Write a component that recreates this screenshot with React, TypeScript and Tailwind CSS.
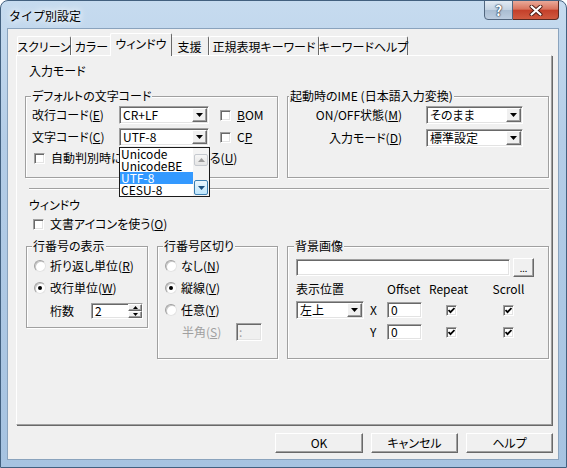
import type { ReactNode } from "react";

const sunken =
  "border border-t-[#a0a0a0] border-l-[#a0a0a0] border-b-white border-r-white shadow-[inset_1px_1px_0_#696969,inset_-1px_-1px_0_#e3e3e3]";
const raised =
  "border border-t-white border-l-white border-b-[#696969] border-r-[#696969] shadow-[inset_-1px_-1px_0_#a0a0a0]";
const tabBase =
  "flex items-center justify-center whitespace-nowrap rounded-t-[2px] border-t border-l border-r border-t-white border-l-white border-r-[#696969] leading-[12px]";

function Group({ title, titleLeft, className, children }: { title: string; titleLeft: string; className: string; children: ReactNode }) {
  return (
    <div className={`relative shrink-0 border border-[#a0a0a0] shadow-[inset_1px_1px_0_#fff,1px_1px_0_#fff] ${className}`}>
      <span className={`absolute top-[-7px] whitespace-nowrap bg-[#f0f0f0] px-[1px] leading-[12px] ${titleLeft}`}>{title}</span>
      {children}
    </div>
  );
}

function DropBtn() {
  return (
    <span className={`mr-[1px] flex h-[14px] w-[15px] shrink-0 items-center justify-center bg-[#f0f0f0] ${raised}`}>
      <svg width="7" height="4" viewBox="0 0 7 4">
        <path d="M0 0h7L3.5 4z" fill="#000" />
      </svg>
    </span>
  );
}

function Combo({ value, className }: { value: string; className: string }) {
  return (
    <div className={`flex shrink-0 items-center bg-white ${sunken} ${className}`}>
      <span className="min-w-0 flex-1 whitespace-nowrap pl-[3px] leading-[14px]">{value}</span>
      <DropBtn />
    </div>
  );
}

function Check({ on, className = "" }: { on?: boolean; className?: string }) {
  return (
    <span className={`flex h-[11px] w-[11px] shrink-0 items-center justify-center bg-white ${sunken} ${className}`}>
      {on && (
        <svg width="7" height="7" viewBox="0 0 7 7">
          <polyline points="0.5,3 2.5,5.2 6.5,1" fill="none" stroke="#000" strokeWidth="1.8" />
        </svg>
      )}
    </span>
  );
}

function Radio({ on }: { on?: boolean }) {
  return (
    <span className="flex h-[12px] w-[12px] shrink-0 items-center justify-center rounded-full border border-t-[#a0a0a0] border-l-[#a0a0a0] border-b-[#e3e3e3] border-r-[#e3e3e3] bg-white shadow-[inset_1px_1px_0_#c8c8c8]">
      {on && <span className="h-[4px] w-[4px] rounded-full bg-black" />}
    </span>
  );
}

function Input({ value, className }: { value: string; className: string }) {
  return <div className={`shrink-0 bg-white pl-[3px] leading-[13px] ${sunken} ${className}`}>{value}</div>;
}

export default function App() {
  return (
    <div className="flex h-[468px] w-[567px] flex-col overflow-hidden rounded-t-[8px] border border-[#42607f] bg-[linear-gradient(180deg,#c6dbef_0%,#b4cde7_30%,#a6c3e1_100%)] font-['Noto_Sans_CJK_JP','Noto_Sans',sans-serif] text-[12px] text-black [font-feature-settings:'palt']">
      {/* title bar */}
      <div className="flex h-[27px] shrink-0 items-start">
        <div className="pl-[8px] pt-[8px] leading-[13px] [font-feature-settings:normal] [text-shadow:0_0_6px_#fff,0_0_10px_#fff]">タイプ別設定</div>
        <div className="-mt-px mr-[7px] ml-auto flex">
          <div className="flex h-[20px] w-[29px] items-center justify-center rounded-bl-[4px] border border-[#52677f] bg-[linear-gradient(180deg,#e2eaf3_0%,#c3d2e2_50%,#a9bdd2_51%,#bccde0_100%)] text-[14px] font-bold leading-none text-white [text-shadow:0_0_1px_#2a3a4e,0_0_1px_#2a3a4e,0_0_2px_#2a3a4e]">
            ?
          </div>
          <div className="flex h-[20px] w-[46px] items-center justify-center rounded-br-[4px] border border-l-0 border-[#5a2a22] bg-[linear-gradient(180deg,#eaa999_0%,#d9745e_45%,#c4402a_52%,#d05a40_100%)]">
            <svg width="14" height="11" viewBox="0 0 14 11">
              <path d="M2.5 1.5L11.5 9.5M11.5 1.5L2.5 9.5" stroke="#4a1a12" strokeWidth="4" strokeLinecap="round" />
              <path d="M2.5 1.5L11.5 9.5M11.5 1.5L2.5 9.5" stroke="#fff" strokeWidth="2.2" strokeLinecap="round" />
            </svg>
          </div>
        </div>
      </div>

      {/* client */}
      <div className="ml-[6px] flex h-[432px] w-[552px] shrink-0 flex-col border border-[#8aa3bd] bg-[#f0f0f0]">
        {/* tabs */}
        <div className="mt-[4px] flex h-[22px] shrink-0 items-end pl-[9px]">
          <div className={`${tabBase} h-[19px] w-[54px] pt-[2px]`}>スクリーン</div>
          <div className={`${tabBase} h-[19px] w-[41px] pt-[2px]`}>カラー</div>
          <div className={`${tabBase} relative z-10 -mx-[2px] -mb-px h-[23px] w-[62px] bg-[#f0f0f0] pb-[2px]`}>ウィンドウ</div>
          <div className={`${tabBase} h-[19px] w-[39px] pt-[2px]`}>支援</div>
          <div className={`${tabBase} h-[19px] w-[110px] pt-[2px]`}>正規表現キーワード</div>
          <div className={`${tabBase} h-[19px] w-[89px] pt-[2px]`}>キーワードヘルプ</div>
        </div>

        {/* panel */}
        <div className="ml-[8px] h-[370px] w-[536px] shrink-0 border border-t-white border-l-white border-b-[#a0a0a0] border-r-[#a0a0a0] pl-[8px] pt-[9px] shadow-[1px_1px_0_#696969]">
          <div className="ml-[4px] leading-[12px]">入力モード</div>

          <div className="mt-[19px] flex gap-[9px]">
            <Group title="デフォルトの文字コード" titleLeft="left-[5px]" className="h-[82px] w-[253px] pl-[6px] pt-[9px]">
              <div className="flex h-[18px] items-center">
                <span className="w-[87px] leading-[12px]">改行コード(<u>E</u>)</span>
                <Combo value="CR+LF" className="h-[18px] w-[90px]" />
                <Check className="ml-[11px]" />
                <span className="ml-[6px] leading-[12px]"><u>B</u>OM</span>
              </div>
              <div className="mt-[4px] flex h-[18px] items-center">
                <span className="w-[87px] leading-[12px]">文字コード(<u>C</u>)</span>
                <div className="relative">
                  <Combo value="UTF-8" className="h-[18px] w-[90px]" />
                  <div className="absolute left-0 top-[19px] z-20 flex h-[50px] w-[91px] border border-[#1a1a1a] bg-white">
                    <div className="flex-1">
                      {["Unicode", "UnicodeBE", "UTF-8", "CESU-8"].map((s) => (
                        <div key={s} className={`h-[12px] pl-[1px] leading-[12px] ${s === "UTF-8" ? "bg-[#3399ff] text-white" : ""}`}>
                          {s}
                        </div>
                      ))}
                    </div>
                    <div className="flex w-[16px] flex-col bg-[#f3f3f3]">
                      <div className="mx-px mt-[6px] flex h-[12px] items-center justify-center rounded-[2px] border border-[#c5c9cf] bg-[linear-gradient(180deg,#f6f6f6,#e4e4e4)]">
                        <svg width="7" height="4" viewBox="0 0 7 4">
                          <path d="M0 4h7L3.5 0z" fill="#9a9a9a" />
                        </svg>
                      </div>
                      <div className="flex-1" />
                      <div className="mx-px mb-px flex h-[15px] items-center justify-center rounded-[2px] border border-[#3c7fb1] bg-[linear-gradient(180deg,#eaf6fd,#bee6fd)]">
                        <svg width="7" height="4" viewBox="0 0 7 4">
                          <path d="M0 0h7L3.5 4z" fill="#1c5180" />
                        </svg>
                      </div>
                    </div>
                  </div>
                </div>
                <Check className="ml-[11px]" />
                <span className="ml-[6px] leading-[12px]">C<u>P</u></span>
              </div>
              <div className="mt-[6px] flex h-[12px] items-center">
                <Check className="ml-[2px]" />
                <span className="ml-[6px] whitespace-nowrap leading-[12px]">自動判別時にCESU-8を判別する(<u>U</u>)</span>
              </div>
            </Group>

            <Group title="起動時のIME (日本語入力変換)" titleLeft="left-[1px]" className="h-[82px] w-[262px] pt-[9px]">
              <div className="flex h-[18px] items-center">
                <span className="w-[114px] text-right leading-[12px]">ON/OFF状態(<u>M</u>)</span>
                <Combo value="そのまま" className="ml-[24px] h-[18px] w-[97px]" />
              </div>
              <div className="mt-[5px] flex h-[18px] items-center">
                <span className="w-[114px] text-right leading-[12px]">入力モード(<u>D</u>)</span>
                <Combo value="標準設定" className="ml-[24px] h-[18px] w-[97px]" />
              </div>
            </Group>
          </div>

          <div className="ml-[4px] mt-[10px] h-[2px] w-[520px] border-t border-b border-t-[#a0a0a0] border-b-white" />

          <div className="ml-[4px] mt-[9px] leading-[12px]">ウィンドウ</div>
          <div className="ml-[8px] mt-[7px] flex h-[12px] items-center">
            <Check />
            <span className="ml-[6px] leading-[12px]">文書アイコンを使う(<u>O</u>)</span>
          </div>

          <div className="ml-[1px] mt-[16px] flex items-start gap-[9px]">
            <Group title="行番号の表示" titleLeft="left-[5px]" className="h-[82px] w-[122px] pl-[7px] pt-[13px]">
              <div className="flex h-[12px] items-center gap-[4px]">
                <Radio />
                <span className="leading-[12px]">折り返し単位(<u>R</u>)</span>
              </div>
              <div className="mt-[10px] flex h-[12px] items-center gap-[4px]">
                <Radio on />
                <span className="leading-[12px]">改行単位(<u>W</u>)</span>
              </div>
              <div className="mt-[9px] flex h-[16px] items-center">
                <span className="ml-[16px] w-[41px] leading-[12px]">桁数</span>
                <div className={`flex h-[16px] w-[52px] items-stretch bg-white ${sunken}`}>
                  <span className="flex-1 pl-[3px] leading-[14px]">2</span>
                  <div className="flex w-[14px] flex-col">
                    <span className={`flex flex-1 items-center justify-center bg-[#f0f0f0] ${raised}`}>
                      <svg width="5" height="3" viewBox="0 0 5 3">
                        <path d="M0 3h5L2.5 0z" fill="#000" />
                      </svg>
                    </span>
                    <span className={`flex flex-1 items-center justify-center bg-[#f0f0f0] ${raised}`}>
                      <svg width="5" height="3" viewBox="0 0 5 3">
                        <path d="M0 0h5L2.5 3z" fill="#000" />
                      </svg>
                    </span>
                  </div>
                </div>
              </div>
            </Group>

            <Group title="行番号区切り" titleLeft="left-[5px]" className="h-[113px] w-[121px] pl-[7px] pt-[13px]">
              <div className="flex h-[12px] items-center gap-[4px]">
                <Radio />
                <span className="leading-[12px]">なし(<u>N</u>)</span>
              </div>
              <div className="mt-[10px] flex h-[12px] items-center gap-[4px]">
                <Radio on />
                <span className="leading-[12px]">縦線(<u>V</u>)</span>
              </div>
              <div className="mt-[10px] flex h-[12px] items-center gap-[4px]">
                <Radio />
                <span className="leading-[12px]">任意(<u>Y</u>)</span>
              </div>
              <div className="mt-[7px] flex h-[18px] items-center">
                <span className="ml-[17px] w-[54px] leading-[12px] text-[#a0a0a0]">半角(<u>S</u>)</span>
                <div className={`h-[18px] w-[26px] bg-[#f0f0f0] pl-[2px] leading-[15px] text-[#a0a0a0] ${sunken}`}>:</div>
              </div>
            </Group>

            <Group title="背景画像" titleLeft="left-[6px]" className="h-[113px] w-[262px] pl-[8px] pt-[11px]">
              <div className="flex h-[19px] items-start">
                <Input value="" className="mt-px h-[17px] w-[214px]" />
                <div className={`ml-[3px] flex h-[19px] w-[21px] items-end justify-center bg-[#f0f0f0] pb-[3px] text-[9px] leading-[9px] ${raised}`}>...</div>
              </div>
              <div className="mt-[6px] grid h-[12px] grid-cols-[68px_23px_35px_59px_55px] leading-[12px]">
                <span className="whitespace-nowrap">表示位置</span>
                <span />
                <span className="whitespace-nowrap">Offset</span>
                <span className="pr-[6px] text-center">Repeat</span>
                <span className="text-center">Scroll</span>
              </div>
              <div className="mt-[5px] grid h-[20px] grid-cols-[68px_23px_35px_59px_55px] items-center">
                <Combo value="左上" className="h-[18px] w-[68px]" />
                <span className="pl-[6px] leading-[12px]">X</span>
                <Input value="0" className="h-[16px] w-[35px]" />
                <span className="flex justify-center"><Check on /></span>
                <span className="flex justify-center"><Check on /></span>
              </div>
              <div className="mt-[2px] grid h-[20px] grid-cols-[68px_23px_35px_59px_55px] items-center">
                <span />
                <span className="pl-[6px] leading-[12px]">Y</span>
                <Input value="0" className="h-[16px] w-[35px]" />
                <span className="flex justify-center"><Check on /></span>
                <span className="flex justify-center"><Check on /></span>
              </div>
            </Group>
          </div>
        </div>

        {/* buttons */}
        <div className="mt-[8px] flex justify-end gap-[8px] pr-[5px]">
          <button className={`h-[20px] w-[88px] bg-[#f0f0f0] leading-[12px] ${raised}`}>OK</button>
          <button className={`h-[20px] w-[87px] bg-[#f0f0f0] leading-[12px] ${raised}`}>キャンセル</button>
          <button className={`h-[20px] w-[87px] bg-[#f0f0f0] leading-[12px] ${raised}`}>ヘルプ</button>
        </div>
      </div>
    </div>
  );
}
